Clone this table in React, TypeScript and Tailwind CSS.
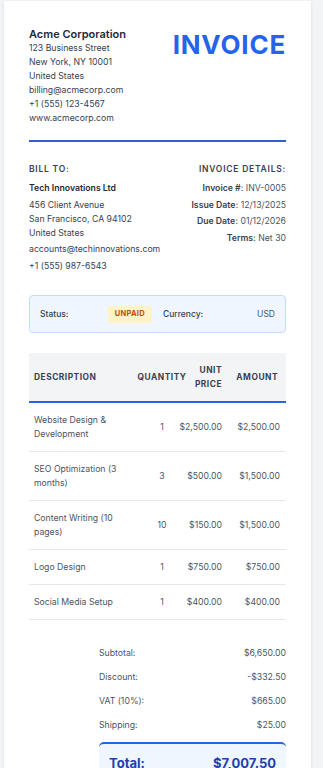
import React from "react";

const items = [
  { d: "Website Design & Development", q: "1", u: "$2,500.00", a: "$2,500.00" },
  { d: "SEO Optimization (3 months)", q: "3", u: "$500.00", a: "$1,500.00" },
  { d: "Content Writing (10 pages)", q: "10", u: "$150.00", a: "$1,500.00" },
  { d: "Logo Design", q: "1", u: "$750.00", a: "$750.00" },
  { d: "Social Media Setup", q: "1", u: "$400.00", a: "$400.00" },
];

const totals = [
  ["Subtotal:", "$6,650.00"],
  ["Discount:", "-$332.50"],
  ["VAT (10%):", "$665.00"],
  ["Shipping:", "$25.00"],
];

export default function App() {
  return (
    <div
      className="min-h-screen bg-[#f3f4f6] pt-px pl-1"
      style={{ fontFamily: "Inter, 'Noto Sans', sans-serif" }}
    >
      <div className="w-[307px] bg-white px-[25px] pt-[26px] pb-6 shadow-sm">
        {/* Header */}
        <div className="flex items-start justify-between border-b-2 border-[#2f5fd0] pb-[15px]">
          <div className="text-[8.7px] leading-[14px] text-[#374151]">
            <div className="text-[11px] font-semibold leading-[14px] text-[#1f2937]">Acme Corporation</div>
            <div>123 Business Street</div>
            <div>New York, NY 10001</div>
            <div>United States</div>
            <div>billing@acmecorp.com</div>
            <div>+1 (555) 123-4567</div>
            <div>www.acmecorp.com</div>
          </div>
          <div className="mt-[5px] text-[26px] font-bold leading-none tracking-[0.03em] text-[#2563eb]">
            INVOICE
          </div>
        </div>

        {/* Bill to / details */}
        <div className="flex justify-between pt-[21px]">
          <div className="flex flex-col gap-[2.75px] text-[8.7px] leading-[14px] text-[#374151]">
            <div className="mb-[3px] text-[8.5px] font-semibold leading-[12px] tracking-[0.09em] text-[#374151]">
              BILL TO:
            </div>
            <div className="font-semibold text-[#1f2937]">Tech Innovations Ltd</div>
            <div>
              <div>456 Client Avenue</div>
              <div>San Francisco, CA 94102</div>
              <div>United States</div>
            </div>
            <div>accounts@techinnovations.com</div>
            <div>+1 (555) 987-6543</div>
          </div>
          <div className="flex flex-col items-end gap-[2.75px] text-[8.7px] leading-[14px] text-[#4b5563]">
            <div className="mb-[3px] text-[8.5px] font-semibold leading-[12px] tracking-[0.09em] text-[#374151]">
              INVOICE DETAILS:
            </div>
            <div>
              <span className="font-semibold text-[#374151]">Invoice #:</span> INV-0005
            </div>
            <div>
              <span className="font-semibold text-[#374151]">Issue Date:</span> 12/13/2025
            </div>
            <div>
              <span className="font-semibold text-[#374151]">Due Date:</span> 01/12/2026
            </div>
            <div>
              <span className="font-semibold text-[#374151]">Terms:</span> Net 30
            </div>
          </div>
        </div>

        {/* Status */}
        <div className="mt-[22px] grid grid-cols-2 gap-[11px] rounded border border-[#bfdbfe] bg-[#eff6ff] px-[10px] py-[9.5px] text-[8.5px] text-[#374151]">
          <div className="flex items-center justify-between">
            <span className="font-medium">Status:</span>
            <span className="flex h-[17px] items-center rounded-[2px] bg-[#fef3c7] px-[7px] text-[7.5px] font-bold tracking-[0.04em] text-[#b45309]">
              UNPAID
            </span>
          </div>
          <div className="flex items-center justify-between">
            <span className="font-medium">Currency:</span>
            <span className="text-[#4b5563]">USD</span>
          </div>
        </div>

        {/* Table */}
        <div className="mt-[20px]">
          <div className="flex items-center border-b-2 border-[#2563eb] bg-[#f3f4f6] py-[10px] pl-[5px] pr-[6px] text-[8.4px] font-bold leading-[14px] tracking-[0.06em] text-[#374151]">
            <div className="min-w-0 flex-1">DESCRIPTION</div>
            <div className="flex w-[64px] justify-center">
              <span className="whitespace-nowrap">QUANTITY</span>
            </div>
            <div className="flex w-[28px] justify-end">
              <span className="whitespace-nowrap text-right">
                UNIT
                <br />
                PRICE
              </span>
            </div>
            <div className="flex w-[58px] justify-end">
              <span className="whitespace-nowrap pr-[2px]">AMOUNT</span>
            </div>
          </div>
          {items.map((it) => (
            <div
              key={it.d}
              className="flex items-center border-b border-[#e5e7eb] py-[10px] pl-[5px] pr-[6px] text-[8.7px] leading-[14px] text-[#4b5563]"
            >
              <div className="min-w-0 flex-1">{it.d}</div>
              <div className="flex w-[64px] justify-center">
                <span className="whitespace-nowrap">{it.q}</span>
              </div>
              <div className="flex w-[28px] justify-end">
                <span className="whitespace-nowrap">{it.u}</span>
              </div>
              <div className="flex w-[58px] justify-end">
                <span className="whitespace-nowrap">{it.a}</span>
              </div>
            </div>
          ))}
        </div>

        {/* Totals */}
        <div className="ml-auto mt-[21px] w-[187px]">
          {totals.map(([l, v]) => (
            <div
              key={l}
              className="flex justify-between py-[5px] text-[8.7px] leading-[14px] text-[#4b5563]"
            >
              <span>{l}</span>
              <span>{v}</span>
            </div>
          ))}
          <div className="mt-[5px] flex justify-between rounded-t-[5px] border-t-2 border-[#2563eb] bg-[#eff6ff] px-[10px] py-[10px] text-[13px] font-bold leading-[18px] text-[#1e40af]">
            <span>Total:</span>
            <span>$7,007.50</span>
          </div>
        </div>
      </div>
    </div>
  );
}
